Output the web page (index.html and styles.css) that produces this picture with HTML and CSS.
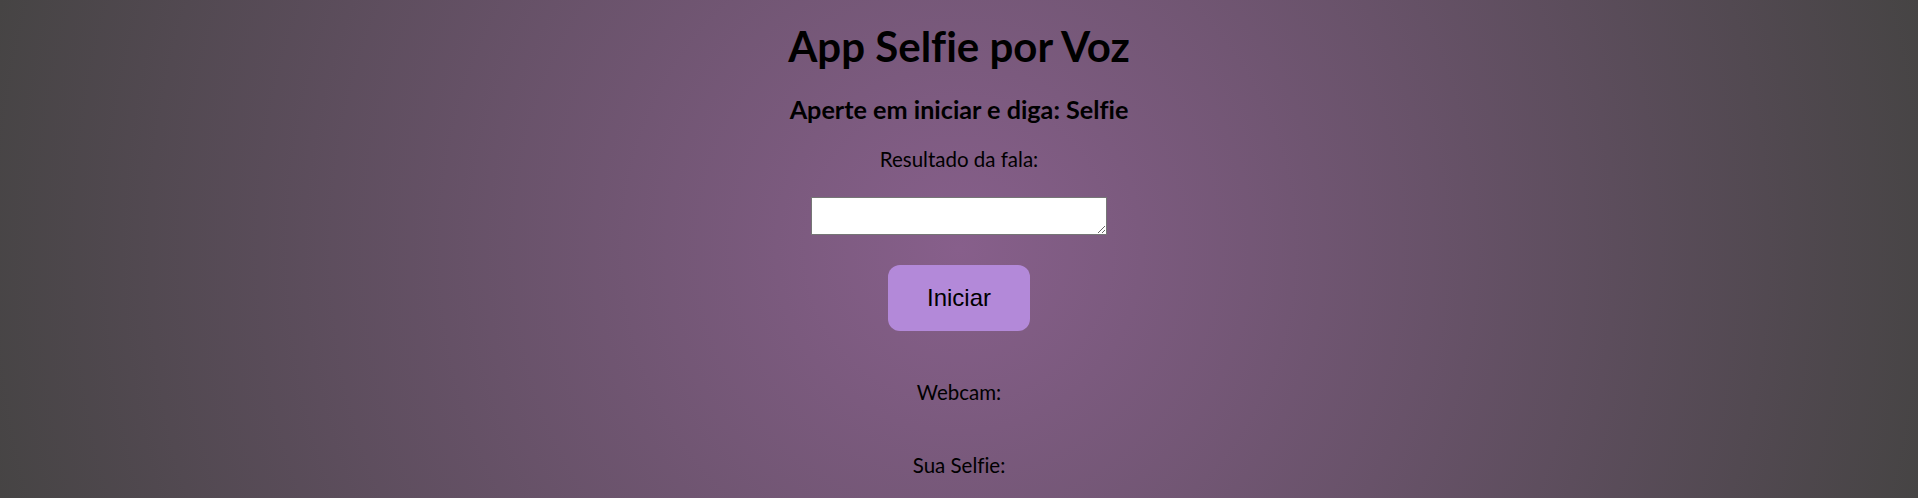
FILE: index.html
```html
<!DOCTYPE html>
<html lang="pt-BR">
<head>
<meta charset="utf-8">
<title>App Selfie por Voz</title>
<link rel="stylesheet" href="styles.css">
</head>
<body>
<main class="app">
  <h1 class="title">App Selfie por Voz</h1>
  <h3 class="subtitle">Aperte em iniciar e diga: Selfie</h3>
  <p class="label label-result">Resultado da fala:</p>
  <textarea class="speech-box"></textarea>
  <button class="start-btn" type="button">Iniciar</button>
  <p class="label label-webcam">Webcam:</p>
  <p class="label label-selfie">Sua Selfie:</p>
</main>
</body>
</html>
```
FILE: styles.css
```css
html, body {
  margin: 0;
  padding: 0;
  height: 100%;
}

body {
  background: radial-gradient(circle, #875f8b 0%, #464444 100%);
  font-family: "Lato", "Open Sans", sans-serif;
  font-variant-ligatures: none;
  font-feature-settings: "liga" 0, "clig" 0;
  color: #000;
  overflow: hidden;
}

.app {
  display: flex;
  flex-direction: column;
  align-items: center;
  padding-top: 21px;
}

.title {
  margin: 0;
  font-size: 42px;
  font-weight: 700;
  line-height: 50px;
}

.subtitle {
  margin: 23px 0 0;
  font-size: 25.2px;
  font-weight: 700;
  line-height: 30px;
}

.label {
  margin: 0;
  font-size: 20.5px;
  font-weight: 400;
  line-height: 24px;
}

.label-result {
  margin-top: 23px;
}

.speech-box {
  margin-top: 26px;
  width: 296px;
  height: 38px;
  box-sizing: border-box;
  background: #fff;
  border: 1px solid #767676;
  padding: 2px;
  font-family: "Liberation Mono", monospace;
  font-size: 13px;
}

.start-btn {
  margin-top: 30px;
  padding: 19px 39px;
  border: none;
  border-radius: 12px;
  background: #b389d9;
  color: #000;
  font-family: "Liberation Sans", Arial, sans-serif;
  font-size: 24px;
  line-height: 28px;
  cursor: pointer;
}

.label-webcam {
  margin-top: 49px;
}

.label-selfie {
  margin-top: 49px;
}
```
